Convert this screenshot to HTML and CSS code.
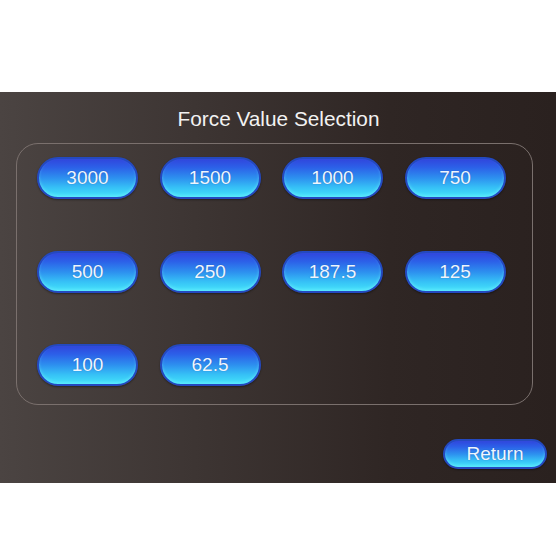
FILE: index.html
```html
<!DOCTYPE html>
<html>
<head>
<meta charset="utf-8">
<link rel="stylesheet" href="styles.css">
</head>
<body>
<div class="top"></div>
<section class="screen">
  <h1 class="title">Force Value Selection</h1>
  <div class="panel">
    <div class="grid">
      <button class="btn">3000</button>
      <button class="btn">1500</button>
      <button class="btn">1000</button>
      <button class="btn">750</button>
      <button class="btn">500</button>
      <button class="btn">250</button>
      <button class="btn">187.5</button>
      <button class="btn">125</button>
      <button class="btn">100</button>
      <button class="btn">62.5</button>
    </div>
  </div>
  <div class="footer">
    <button class="btn ret">Return</button>
  </div>
</section>
</body>
</html>
```
FILE: styles.css
```css
html, body {
  margin: 0;
  padding: 0;
  background: #ffffff;
  font-family: "Liberation Sans", Arial, sans-serif;
}
.top {
  height: 92px;
}
.screen {
  height: 391px;
  background: linear-gradient(90deg, #4b4442 0%, #3d3533 35%, #2f2624 70%, #2a211f 100%);
  display: flex;
  flex-direction: column;
  box-sizing: border-box;
  padding-top: 15px;
}
.title {
  margin: 0;
  font-weight: normal;
  font-size: 20.8px;
  line-height: 24px;
  color: #f2f2f2;
  text-align: center;
  padding-left: 1px;
}
.panel {
  margin: 12px 0 0 16px;
  width: 517px;
  height: 262px;
  box-sizing: border-box;
  border: 1px solid #7a706d;
  border-radius: 22px;
  padding: 13px 0 0 20px;
}
.grid {
  display: grid;
  grid-template-columns: repeat(4, 101px);
  grid-auto-rows: 42px;
  column-gap: 21.5px;
  row-gap: 51.5px;
}
.btn {
  width: 101px;
  height: 42px;
  box-sizing: border-box;
  border: 2px solid #2449c0;
  border-radius: 21px;
  background: linear-gradient(180deg, #3046dc 0%, #2c60e8 22%, #2d90ef 50%, #36c0f6 75%, #44e4fa 100%);
  box-shadow: inset 0 -2px 3px rgba(120, 240, 255, 0.45), 0 1px 2px rgba(0,0,0,0.4);
  color: #eef6ff;
  font-family: "Liberation Sans", Arial, sans-serif;
  font-size: 19px;
  padding: 0;
  text-shadow: 0 0 1px rgba(0,40,120,0.5);
}
.footer {
  display: flex;
  justify-content: flex-end;
  padding: 34px 9px 0 0;
}
.ret {
  width: 104px;
  height: 30px;
  border-radius: 15px;
  font-size: 19px;
}
```
